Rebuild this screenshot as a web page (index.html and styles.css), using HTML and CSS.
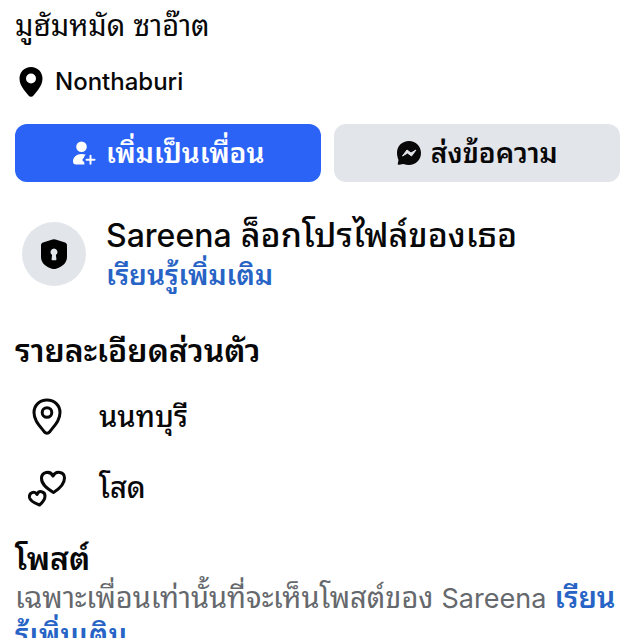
FILE: index.html
```html
<!DOCTYPE html>
<html lang="th">
<head>
  <meta charset="UTF-8">
  <meta name="viewport" content="width=device-width, initial-scale=1.0">
  <title>Sareena</title>
  <link rel="stylesheet" href="styles.css">
</head>
<body>
  <main class="profile">
    <p class="bio">มูฮัมหมัด ซาอ๊าต</p>

    <div class="place">
      <svg class="pin" viewBox="0 0 24 30"><path fill-rule="evenodd" d="M12 0C5.500 0 .5 5 .5 11.500c0 4.500 2 8 4.500 11.500l4.500 5.500a3.200 3.200 0 0 0 5 0L19 23c2.500-3.500 4.500-7 4.500-11.500C23.500 5 18.500 0 12 0zm0 6.500a5 5 0 1 1 0 10 5 5 0 0 1 0-10z"/></svg>
      <span>Nonthaburi</span>
    </div>

    <div class="actions">
      <button class="btn primary" type="button">
        <svg class="icon" viewBox="0 0 24 24"><circle cx="9.500" cy="5.800" r="5.300"/><path d="M4 23.500C2 23.500 1 22.500 1 20.500c0-4.200 3.500-7.500 8.500-7.500 1.600 0 3 .3 4.300.8-1.300 1-1.800 2-1.800 3.200-2 .5-2 3.500.2 3.800 0 1 .1 1.800.3 2.700z"/><path class="plus" d="M18.500 14.800v8M14.500 18.800h8"/></svg>
        <span>เพิ่มเป็นเพื่อน</span>
      </button>
      <button class="btn secondary" type="button">
        <svg class="icon" viewBox="0 0 24 24"><path d="M12 0C5.200 0 0 5 0 11.700c0 3 .8 5.300 1.500 7.300L.8 22.500c-.2.900.4 1.300 1.200 1.200l4.500-.8c1.700.7 3.500 1.100 5.500 1.100 6.800 0 12-5.300 12-12S18.800 0 12 0z"/><path class="bolt" d="M5.500 15l4.500-6 4 3 5-3-4.500 6-4-3z"/></svg>
        <span>ส่งข้อความ</span>
      </button>
    </div>

    <section class="locked">
      <div class="badge">
        <svg viewBox="0 0 28 32"><path fill-rule="evenodd" d="M12.500 1.500a4 4 0 0 1 3 0L25 4.500c1.500.5 2 1.500 2 3V19c0 6-5 10-11 11.700a7 7 0 0 1-4 0C6 29 1 25 1 19V7.500c0-1.500.5-2.500 2-3zM14 10.500a3.500 3.500 0 0 0-1.900 6.400l-.5 4.100c-.1.800.4 1.200 1 1.200h2.800c.6 0 1.100-.4 1-1.200l-.5-4.100A3.500 3.500 0 0 0 14 10.500z"/></svg>
      </div>
      <div>
        <h1><span class="name">Sareena</span> ล็อกโปรไฟล์ของเธอ</h1>
        <a href="#learn">เรียนรู้เพิ่มเติม</a>
      </div>
    </section>

    <section class="details">
      <h2>รายละเอียดส่วนตัว</h2>
      <ul>
        <li>
          <svg viewBox="0 0 38 38"><path d="M19 2C11.500 2 6 7.500 6 14.500c0 8 5.500 13 10.500 19.500a3.200 3.200 0 0 0 5 0C26.500 27.500 32 22.500 32 14.500 32 7.500 26.500 2 19 2z"/><circle cx="19" cy="14.500" r="4.800"/></svg>
          <span>นนทบุรี</span>
        </li>
        <li>
          <svg viewBox="0 0 38 38"><path d="M25.500 23.500C19 19.500 13.500 15.500 13.500 9.500c0-6.500 8.500-8.500 11.500-2.500 3-6 11.500-4 11.500 2 0 6-5.500 11-11 14.500z"/><path d="M11.500 36C6 34 2 31.500 1.500 28.500c-.7-5 5-7 7.500-3 1.500-4.500 8-3.500 8 1.500 0 3.500-2.500 6.500-5.500 9z"/></svg>
          <span>โสด</span>
        </li>
      </ul>
    </section>

    <section class="posts">
      <h2>โพสต์</h2>
      <p>เฉพาะเพื่อนเท่านั้นที่จะเห็นโพสต์ของ <span class="name">Sareena</span> <a href="#posts">เรียน<wbr>รู้เพิ่มเติม</a></p>
    </section>
  </main>
</body>
</html>
```
FILE: styles.css
```css
* {
  box-sizing: border-box;
}

html {
  overflow: hidden;
}

body {
  margin: 0;
  background: #fff;
  color: #080809;
  font-family: Inter, "Noto Sans Thai Looped", Loma, Garuda, "Noto Sans", sans-serif;
  font-size: 29px;
  line-height: 36px;
}

h1, h2, p, ul {
  margin: 0;
  padding: 0;
}

a {
  color: #2764c5;
  font-weight: 600;
  text-decoration: none;
}

.profile {
  padding: 8px 18px 0 15px;
}

.place {
  display: flex;
  align-items: center;
  gap: 12px;
  margin-top: 20px;
  padding-left: 4px;
  font-size: 24px;
  font-weight: 500;
}

.pin {
  width: 24px;
  height: 30px;
}

.actions {
  display: flex;
  gap: 13px;
  margin-top: 24px;
}

.btn {
  display: flex;
  flex: 286 1 0;
  align-items: center;
  justify-content: center;
  gap: 10px;
  height: 58px;
  padding: 0;
  border: 0;
  border-radius: 12px;
  background: #e2e5e9;
  color: #080809;
  font: inherit;
  font-size: 28px;
  font-weight: 600;
}

.primary {
  flex-grow: 307;
  background: #2b63f6;
  color: #fff;
}

.icon {
  width: 24px;
  height: 24px;
  fill: currentColor;
}

.plus {
  fill: none;
  stroke: currentColor;
  stroke-width: 2;
  stroke-linecap: round;
}

.bolt {
  fill: #e2e5e9;
  stroke: #e2e5e9;
  stroke-linejoin: round;
}

.locked {
  display: flex;
  align-items: center;
  gap: 20px;
  margin-top: 32px;
  padding-left: 7px;
}

.badge {
  display: flex;
  align-items: center;
  justify-content: center;
  width: 64px;
  height: 64px;
  border-radius: 50%;
  background: #e2e5e9;
}

.badge svg {
  width: 28px;
  height: 32px;
}

.locked h1 {
  font-size: 34px;
  font-weight: 500;
  line-height: 42px;
}

.locked .name {
  font-size: 32px;
}

.locked a {
  display: block;
  font-size: 28px;
}

h2 {
  font-size: 32px;
  font-weight: 600;
  line-height: 42px;
}

.details {
  margin-top: 37px;
}

.details ul {
  padding: 9px 0 15px;
  list-style: none;
}

.details li {
  display: flex;
  align-items: center;
  gap: 33px;
  height: 71px;
  padding-left: 13px;
  font-weight: 500;
}

.details svg {
  width: 38px;
  height: 38px;
  fill: none;
  stroke: #080809;
  stroke-width: 3;
  stroke-linejoin: round;
}

.posts p {
  color: #65686c;
}

.posts .name {
  font-size: 27px;
}
```
